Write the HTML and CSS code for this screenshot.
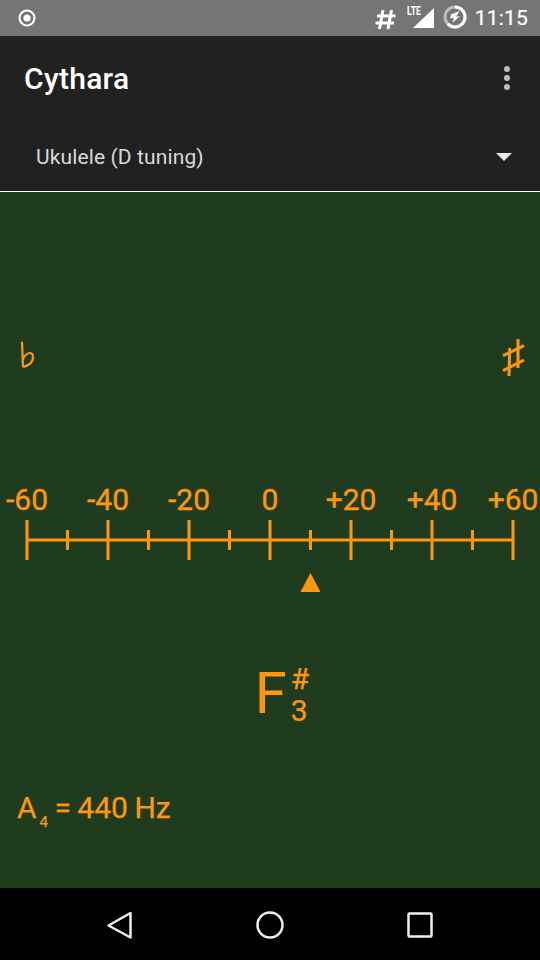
FILE: index.html
```html
<!DOCTYPE html>
<html lang="en">
<head>
<meta charset="utf-8">
<title>Cythara</title>
<link rel="stylesheet" href="styles.css">
</head>
<body>
<div class="app">
  <header class="status">
    <svg class="ic-radio" width="18" height="18" viewBox="0 0 18 18"><circle cx="9" cy="9" r="7.500" fill="none" stroke="#fff" stroke-width="2"/><circle cx="9" cy="9" r="3.600" fill="#fff"/></svg>
    <div class="status-right">
      <svg class="ic-hash" width="21" height="21" viewBox="0 0 21 21"><path d="M8 1 4.500 20M16.500 1 13 20M2 7h18.500M.5 14h18.500" fill="none" stroke="#fff" stroke-width="3"/></svg>
      <div class="signal">
        <span class="lte">LTE</span>
        <svg width="22" height="22" viewBox="0 0 22 22"><path d="M21 1v20H0z" fill="#fff"/></svg>
      </div>
      <svg class="ic-batt" width="24" height="24" viewBox="0 0 24 24"><circle cx="12" cy="12" r="10" fill="none" stroke="#bdbdbd" stroke-width="3"/><path d="M12 2a10 10 0 0 1 4 19.200 10 10 0 0 1-11-2.500" fill="none" stroke="#fff" stroke-width="3"/><path d="M16.500 6 8 9.500l-1 4 4-.8-1.500 5L17 11l-4 .8z" fill="#fff"/></svg>
      <span class="time">11:15</span>
    </div>
  </header>
  <div class="toolbar">
    <span class="title">Cythara</span>
    <div class="overflow"><i></i><i></i><i></i></div>
  </div>
  <div class="spinner">
    <span class="spinner-text">Ukulele (D tuning)</span>
    <span class="caret"></span>
  </div>
  <main class="tuner">
    <div class="accidentals">
      <svg class="flat" width="16" height="28" viewBox="0 0 16 28"><path d="M3 .7 4 26M4 18C6 14 9 12 11 12 14 12 14.500 16 13.500 19 12 23 8 25 4 26" fill="none" stroke="#ff9610" stroke-width="2.200"/></svg>
      <svg width="24" height="40" viewBox="0 0 24 40"><path d="M8.700 10 8 38M17 1v29M2 17.700 23 7.700M2 32.700 23 22" fill="none" stroke="#ff9610" stroke-width="3"/></svg>
    </div>
    <svg class="scale" width="540" height="116" viewBox="0 0 540 116">
      <g class="labels">
        <text x="27" y="38">-60</text><text x="108" y="38">-40</text><text x="189" y="38">-20</text><text x="270" y="38">0</text><text x="351" y="38">+20</text><text x="432" y="38">+40</text><text x="513" y="38">+60</text>
      </g>
      <path class="ticks" d="M27 68h486M27 48v40M108 48v40M189 48v40M270 48v40M351 48v40M432 48v40M513 48v40"/>
      <path class="ticks" d="M67.500 58v20M148.500 58v20M229.500 58v20M310.500 58v20M391.500 58v20M472.500 58v20"/>
      <path class="needle" d="M310.500 101 320.500 120H300.500z"/>
    </svg>
    <div class="note">
      <span class="note-name">F</span>
      <span class="note-mods"><span class="sharp">#</span><span class="octave">3</span></span>
    </div>
    <div class="ref">A<sub class="ref-sub">4</sub> = 440 Hz</div>
  </main>
  <nav class="navbar">
    <svg width="28" height="28" viewBox="0 0 28 28"><path d="M24.500 2v24.500L2.500 14.500z" fill="none" stroke="#eee" stroke-width="2.500" stroke-linejoin="round"/></svg>
    <svg width="28" height="28" viewBox="0 0 28 28"><circle cx="14" cy="14" r="12.500" fill="none" stroke="#eee" stroke-width="2.500"/></svg>
    <svg width="28" height="28" viewBox="0 0 28 28"><rect x="2.500" y="2.500" width="23" height="23" rx="1" fill="none" stroke="#eee" stroke-width="2.500"/></svg>
  </nav>
</div>
</body>
</html>
```
FILE: styles.css
```css
* { box-sizing: border-box; }
html, body { margin: 0; padding: 0; }
body { font-family: Roboto, "Liberation Sans", sans-serif; background: #000; }
.app { width: 540px; height: 960px; display: flex; flex-direction: column; overflow: hidden; }

.status { height: 36px; background: #757575; display: flex; align-items: center; justify-content: space-between; padding: 0 12px 0 18px; flex: none; }
.status-right { display: flex; align-items: center; }
.ic-hash { margin-right: 17px; margin-top: 3px; }
.signal { position: relative; width: 22px; height: 22px; margin-right: 8px; }
.signal svg { display: block; }
.lte { position: absolute; left: -6px; top: -2px; font-size: 12px; font-weight: 700; color: #fff; transform: scaleX(.72); transform-origin: left top; line-height: 12px; }
.ic-batt { margin-right: 8px; margin-top: -2px; }
.time { font-size: 21px; color: #fff; line-height: 36px; letter-spacing: .2px; -webkit-text-stroke: .2px #fff; }

.toolbar { height: 84px; background: #212121; display: flex; align-items: center; justify-content: space-between; padding: 0 30px 0 24px; flex: none; }
.title { font-size: 30px; font-weight: 500; color: #fff; letter-spacing: .3px; }
.overflow { display: flex; flex-direction: column; gap: 3px; }
.overflow i { width: 6px; height: 6px; border-radius: 50%; background: #bdbdbd; display: block; }

.spinner { height: 72px; background: #212121; border-top: 1px solid #1d1d1d; border-bottom: 1px solid #fff; display: flex; align-items: center; justify-content: space-between; padding: 1px 28px 0 36px; flex: none; }
.spinner-text { font-size: 21px; color: #d9d9d9; letter-spacing: .12px; }
.caret { width: 0; height: 0; border-left: 8px solid transparent; border-right: 8px solid transparent; border-top: 8px solid #e6e6e6; }

.tuner { flex: 1; background: #1f3c1f; display: flex; flex-direction: column; color: #ff9610; }
.accidentals { display: flex; justify-content: space-between; align-items: flex-start; padding: 0 15px 0 19px; margin-top: 146px; height: 38px; }
.accidentals svg { display: block; }
.flat { margin-top: 3px; }
.scale { display: block; margin-top: 96px; overflow: visible; flex: none; }
.labels text { font-family: Roboto, sans-serif; font-size: 30px; fill: #ff9610; stroke: #ff9610; stroke-width: .35px; text-anchor: middle; }
.ticks { fill: none; stroke: #ff9610; stroke-width: 3; }
.needle { fill: #ff9610; }

.note { display: flex; align-items: flex-start; justify-content: center; margin-top: 78px; height: 60px; padding-left: 24px; }
.note-name { font-size: 58px; line-height: 70px; margin-right: 4px; margin-top: -8px; }
.note-mods { display: flex; flex-direction: column; align-items: flex-start; font-size: 30px; line-height: 30px; margin-top: 6px; -webkit-text-stroke: .25px #ff9610; }
.sharp { margin-top: -8px; line-height: 30px; }
.octave { margin-top: 2px; }

.ref { font-size: 30px; line-height: 36px; margin-top: 64px; margin-left: 17px; word-spacing: -1px; -webkit-text-stroke: .25px #ff9610; }
.ref-sub { font-size: 15px; vertical-align: baseline; position: relative; top: 9px; margin-left: 3px; line-height: 0; }

.navbar { height: 72px; background: #000; display: flex; align-items: center; justify-content: center; gap: 122px; padding-top: 1px; flex: none; }
.navbar svg { display: block; }
```
